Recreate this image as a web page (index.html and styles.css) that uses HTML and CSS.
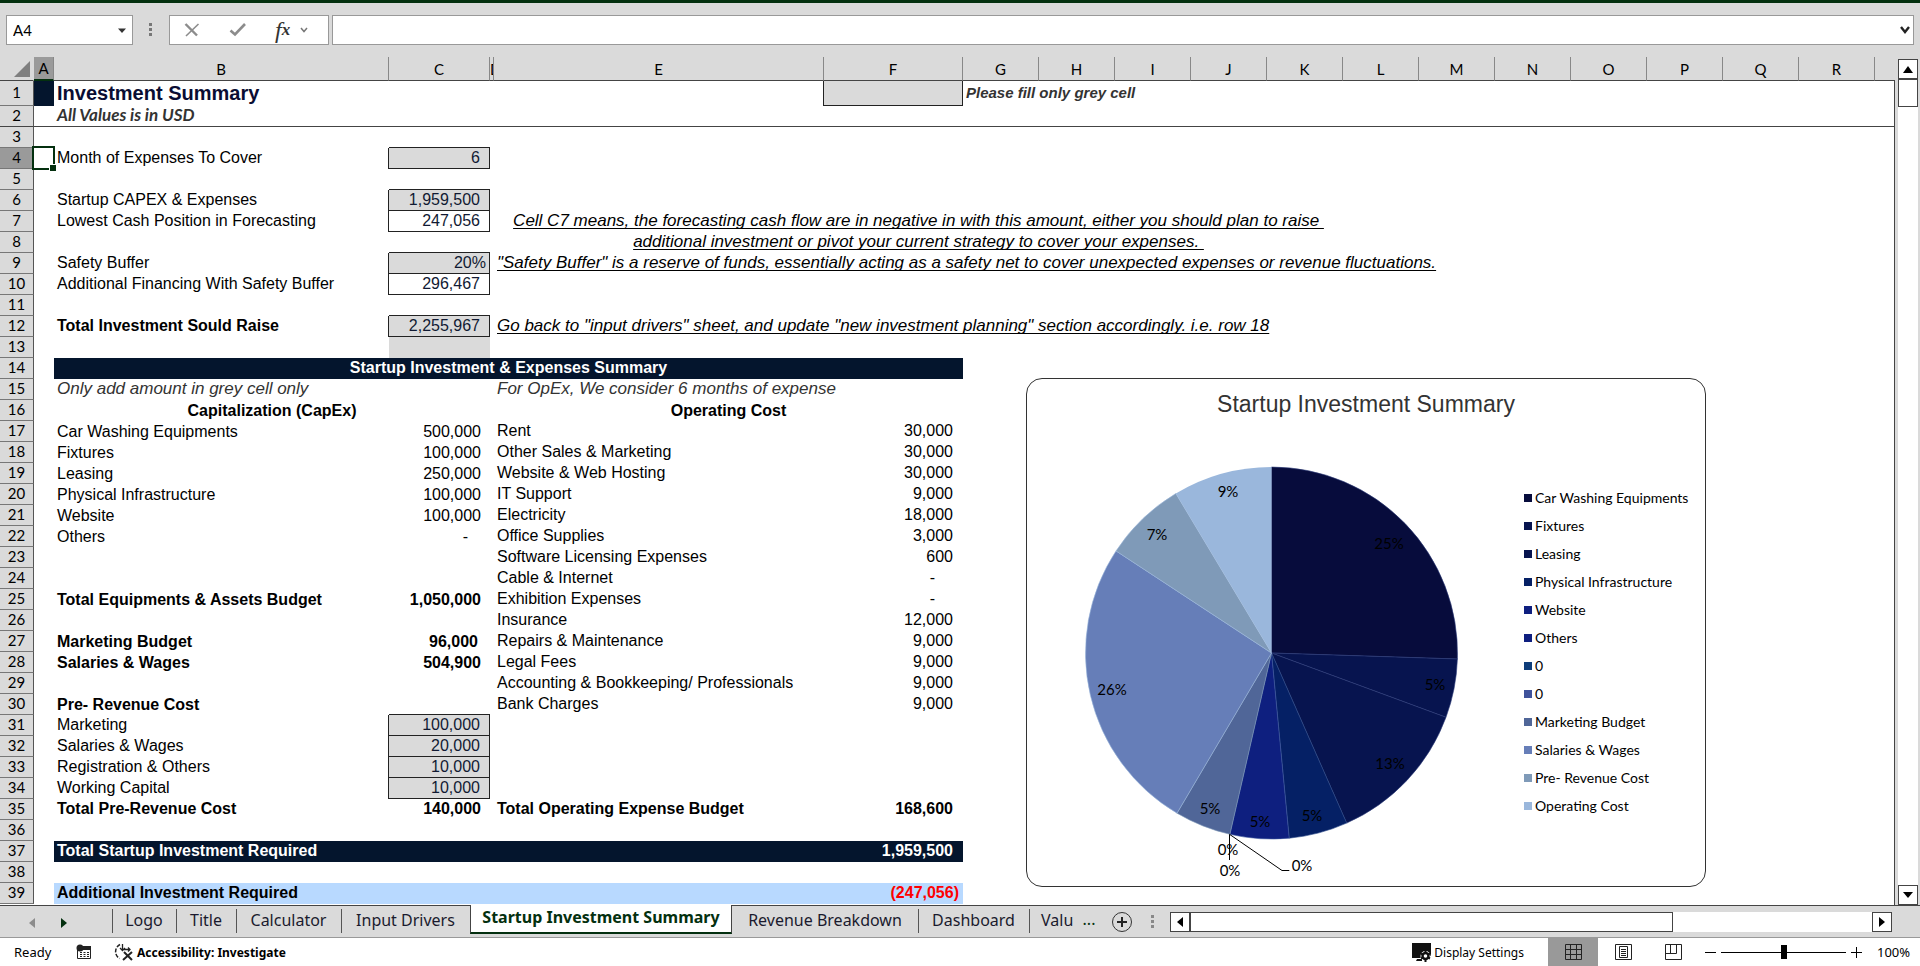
FILE: index.html
```html
<!DOCTYPE html>
<html lang="en">
<head>
<meta charset="utf-8">
<title>Startup Investment Summary</title>
<link rel="stylesheet" href="styles.css">
</head>
<body>
<div class="app">
  <header class="formula-bar">
    <div class="name-box">
      <input class="name-input" type="text" value="A4" aria-label="Name box">
      <button class="plain" type="button" aria-label="Open name list"><svg width="8" height="5" viewBox="0 0 8 5"><path d="M0 0.500h8L4 5z" fill="#333"/></svg></button>
    </div>
    <svg class="grip" width="4" height="14" viewBox="0 0 4 14"><path d="M0 0h3v3H0zM0 5h3v3H0zM0 10h3v3H0z" fill="#777"/></svg>
    <div class="fx-box">
      <button class="plain" type="button" aria-label="Cancel"><svg width="18" height="16" viewBox="0 0 18 16"><path d="M2.500 2L14 13.500" stroke="#8c8c8c" stroke-width="2.400" fill="none"/><path d="M15.500 2L3 14" stroke="#8c8c8c" stroke-width="1.600" fill="none"/></svg></button>
      <button class="plain" type="button" aria-label="Enter"><svg width="18" height="16" viewBox="0 0 18 16"><path d="M1.500 8.500L6 12.500L16 2" stroke="#8c8c8c" stroke-width="2.600" fill="none"/></svg></button>
      <div class="fx-group">
        <button class="plain fx" type="button" aria-label="Insert function"><i>f</i><i class="fx-x">x</i></button>
        <button class="plain" type="button" aria-label="More functions"><svg width="8" height="6" viewBox="0 0 8 6"><path d="M1 1l3 3.500L7 1" stroke="#777" stroke-width="1.500" fill="none"/></svg></button>
      </div>
    </div>
    <div class="formula">
      <input class="formula-input" type="text" aria-label="Formula">
      <button class="plain" type="button" aria-label="Expand formula bar"><svg width="10" height="8" viewBox="0 0 10 8"><path d="M1 1l4 5L9 1" stroke="#222" stroke-width="2.400" fill="none"/></svg></button>
    </div>
  </header>

  <main class="workspace">
    <div class="sheet">
      <table class="grid">
        <colgroup>
          <col class="w-num"><col class="w-a"><col class="w-b"><col class="w-c"><col class="w-d"><col class="w-e"><col class="w-f">
          <col class="w-s"><col class="w-s"><col class="w-s"><col class="w-s"><col class="w-s"><col class="w-s"><col class="w-s"><col class="w-s"><col class="w-s"><col class="w-s"><col class="w-s"><col class="w-s"><col>
        </colgroup>
        <thead>
          <tr>
            <th class="corner"><svg width="16" height="16" viewBox="0 0 16 16"><path d="M16 0v16H0z" fill="#7f7f7f"/></svg></th>
            <th class="current">A</th><th>B</th><th>C</th><th class="narrow">D</th><th>E</th><th>F</th><th>G</th><th>H</th><th>I</th><th>J</th><th>K</th><th>L</th><th>M</th><th>N</th><th>O</th><th>P</th><th>Q</th><th>R</th><th class="rest"></th>
          </tr>
        </thead>
        <tbody class="raised">
          <tr class="first"><th>1</th><td class="navy"></td><td class="title">Investment Summary</td><td></td><td></td><td></td><td class="sample"></td><td class="hint" colspan="4">Please fill only grey cell</td></tr>
          <tr class="frozen"><th>2</th><td></td><td class="subtitle">All Values is in USD</td><td colspan="17"></td></tr>
          <tr><th>3</th></tr>
          <tr><th class="current">4</th><td class="selected"></td><td>Month of Expenses To Cover</td><td class="num box grey">6</td></tr>
          <tr><th>5</th></tr>
          <tr><th>6</th><td></td><td>Startup CAPEX &amp; Expenses</td><td class="num box grey">1,959,500</td></tr>
          <tr><th>7</th><td></td><td>Lowest Cash Position in Forecasting</td><td class="num box">247,056</td><td></td><td class="note center" colspan="7">Cell C7 means, the forecasting cash flow are in negative in with this amount, either you should plan to raise </td></tr>
          <tr><th>8</th><td></td><td></td><td></td><td></td><td class="note center" colspan="7">additional investment or pivot your current strategy to cover your expenses. </td></tr>
          <tr><th>9</th><td></td><td>Safety Buffer</td><td class="num box grey percent">20%</td><td></td><td class="note" colspan="9">"Safety Buffer" is a reserve of funds, essentially acting as a safety net to cover unexpected expenses or revenue fluctuations.</td></tr>
          <tr><th>10</th><td></td><td>Additional Financing With Safety Buffer</td><td class="num box">296,467</td></tr>
          <tr><th>11</th></tr>
          <tr><th>12</th><td></td><td class="bold">Total Investment Sould Raise</td><td class="num box grey">2,255,967</td><td></td><td class="note" colspan="9">Go back to "input drivers" sheet, and update "new investment planning" section accordingly. i.e. row 18</td></tr>
          <tr><th>13</th><td></td><td></td><td class="grey"></td></tr>
          <tr><th>14</th><td></td><td class="navy bold center" colspan="5">Startup Investment &amp; Expenses Summary</td></tr>
          <tr><th>15</th><td></td><td class="remark">Only add amount in grey cell only</td><td></td><td></td><td class="remark" colspan="2">For OpEx, We consider 6 months of expense</td></tr>
        </tbody>
        <tbody>
          <tr><th>16</th><td></td><td class="bold center" colspan="2">Capitalization (CapEx)</td><td></td><td class="bold center" colspan="2">Operating Cost</td></tr>
          <tr><th>17</th><td></td><td>Car Washing Equipments</td><td class="num">500,000</td><td></td><td class="op">Rent</td><td class="num op">30,000</td></tr>
          <tr><th>18</th><td></td><td>Fixtures</td><td class="num">100,000</td><td></td><td class="op">Other Sales &amp; Marketing</td><td class="num op">30,000</td></tr>
          <tr><th>19</th><td></td><td>Leasing</td><td class="num">250,000</td><td></td><td class="op">Website &amp; Web Hosting</td><td class="num op">30,000</td></tr>
          <tr><th>20</th><td></td><td>Physical Infrastructure</td><td class="num">100,000</td><td></td><td class="op">IT Support</td><td class="num op">9,000</td></tr>
          <tr><th>21</th><td></td><td>Website</td><td class="num">100,000</td><td></td><td class="op">Electricity</td><td class="num op">18,000</td></tr>
          <tr><th>22</th><td></td><td>Others</td><td class="num nil">-</td><td></td><td class="op">Office Supplies</td><td class="num op">3,000</td></tr>
          <tr><th>23</th><td></td><td></td><td></td><td></td><td class="op">Software Licensing Expenses</td><td class="num op">600</td></tr>
          <tr><th>24</th><td></td><td></td><td></td><td></td><td class="op">Cable &amp; Internet</td><td class="num op nil">-</td></tr>
          <tr><th>25</th><td></td><td class="bold">Total Equipments &amp; Assets Budget</td><td class="num bold">1,050,000</td><td></td><td class="op">Exhibition Expenses</td><td class="num op nil">-</td></tr>
          <tr><th>26</th><td></td><td></td><td></td><td></td><td class="op">Insurance</td><td class="num op">12,000</td></tr>
          <tr><th>27</th><td></td><td class="bold">Marketing Budget</td><td class="num bold inset">96,000</td><td></td><td class="op">Repairs &amp; Maintenance</td><td class="num op">9,000</td></tr>
          <tr><th>28</th><td></td><td class="bold">Salaries &amp; Wages</td><td class="num bold">504,900</td><td></td><td class="op">Legal Fees</td><td class="num op">9,000</td></tr>
          <tr><th>29</th><td></td><td></td><td></td><td></td><td class="op">Accounting &amp; Bookkeeping/ Professionals</td><td class="num op">9,000</td></tr>
          <tr><th>30</th><td></td><td class="bold">Pre- Revenue Cost</td><td></td><td></td><td class="op">Bank Charges</td><td class="num op">9,000</td></tr>
        </tbody>
        <tbody class="raised">
          <tr><th>31</th><td></td><td>Marketing</td><td class="num box grey">100,000</td></tr>
          <tr><th>32</th><td></td><td>Salaries &amp; Wages</td><td class="num box grey">20,000</td></tr>
          <tr><th>33</th><td></td><td>Registration &amp; Others</td><td class="num box grey">10,000</td></tr>
          <tr><th>34</th><td></td><td>Working Capital</td><td class="num box grey">10,000</td></tr>
          <tr><th>35</th><td></td><td class="bold">Total Pre-Revenue Cost</td><td class="num bold">140,000</td><td></td><td class="bold">Total Operating Expense Budget</td><td class="num op bold">168,600</td></tr>
          <tr><th>36</th></tr>
          <tr><th>37</th><td></td><td class="navy bold" colspan="4">Total Startup Investment Required</td><td class="navy num op bold">1,959,500</td></tr>
          <tr><th>38</th></tr>
          <tr><th>39</th><td></td><td class="sky bold" colspan="4">Additional Investment Required</td><td class="sky num bold negative">(247,056)</td></tr>
        </tbody>
      </table>

      <figure class="chart">
        <figcaption class="chart-title">Startup Investment Summary</figcaption>
        <div class="chart-body">
          <svg class="pie" width="497" height="447" viewBox="0 0 497 447" role="img" aria-label="Share of startup investment by category">
            <g stroke-width="0.600" stroke-linejoin="round">
              <path d="M244.500 214V28A186 186 0 0 1 430.400 220z" fill="#070c3c" stroke="#2b3a78"/>
              <path d="M244.500 214L430.400 220A186 186 0 0 1 419 278.300z" fill="#07144f" stroke="#2b3a78"/>
              <path d="M244.500 214L419 278.300A186 186 0 0 1 319.700 384.100z" fill="#07144f" stroke="#2b3a78"/>
              <path d="M244.500 214L319.700 384.100A186 186 0 0 1 262.200 399.200z" fill="#052065" stroke="#2b4a88"/>
              <path d="M244.500 214L262.200 399.200A186 186 0 0 1 202.900 395.300z" fill="#0e1f7f" stroke="#3f5aa0"/>
              <path d="M244.500 214L202.900 395.300A186 186 0 0 1 150 374.200z" fill="#506698" stroke="#7f9ab8"/>
              <path d="M244.500 214L150 374.200A186 186 0 0 1 89 111.900z" fill="#667eb8" stroke="#9ab7dc"/>
              <path d="M244.500 214L89 111.900A186 186 0 0 1 148.800 54.500z" fill="#7f9ab8" stroke="#9ab7dc"/>
              <path d="M244.500 214L148.800 54.500A186 186 0 0 1 244.500 28z" fill="#9ab7dc"/>
            </g>
            <path d="M202.500 395.300V421M202.500 395.300L255 431.500H262.300" stroke="#000" fill="none"/>
            <g class="pie-labels" text-anchor="middle">
              <text x="362" y="110">25%</text><text x="408" y="251">5%</text><text x="363" y="330">13%</text>
              <text x="285" y="382">5%</text><text x="233" y="388">5%</text><text x="183" y="375">5%</text>
              <text x="85" y="256">26%</text><text x="130" y="101">7%</text><text x="201" y="58">9%</text>
              <text x="201" y="416">0%</text><text x="203" y="437">0%</text><text x="275" y="432">0%</text>
            </g>
          </svg>
          <ul class="legend">
            <li class="k1">Car Washing Equipments</li><li class="k2">Fixtures</li><li class="k3">Leasing</li><li class="k4">Physical Infrastructure</li><li class="k5">Website</li><li class="k6">Others</li><li class="k7">0</li><li class="k8">0</li><li class="k9">Marketing Budget</li><li class="k10">Salaries &amp; Wages</li><li class="k11">Pre- Revenue Cost</li><li class="k12">Operating Cost</li>
          </ul>
        </div>
      </figure>
    </div>
    <div class="vscroll">
      <button class="scroll-btn" type="button" aria-label="Scroll up"><svg width="10" height="7" viewBox="0 0 10 7"><path d="M5 0l5 7H0z"/></svg></button>
      <div class="vthumb"></div>
      <div class="vtrack"></div>
      <button class="scroll-btn" type="button" aria-label="Scroll down"><svg width="10" height="6" viewBox="0 0 10 6"><path d="M0 0h10L5 6z"/></svg></button>
    </div>
  </main>

  <nav class="tabs" aria-label="Sheets">
    <div class="tab-nav">
      <button class="plain" type="button" aria-label="Previous sheet"><svg width="6" height="10" viewBox="0 0 6 10"><path d="M6 0v10L0 5z" fill="#8c8c8c"/></svg></button>
      <button class="plain" type="button" aria-label="Next sheet"><svg width="6" height="10" viewBox="0 0 6 10"><path d="M0 0v10l6-5z" fill="#04300f"/></svg></button>
    </div>
    <button class="tab t1" type="button">Logo</button>
    <button class="tab t2" type="button">Title</button>
    <button class="tab t3" type="button">Calculator</button>
    <button class="tab t4" type="button">Input Drivers</button>
    <button class="tab active" type="button">Startup Investment Summary</button>
    <button class="tab t6" type="button">Revenue Breakdown</button>
    <button class="tab t7" type="button">Dashboard</button>
    <button class="tab t8" type="button">Valu</button>
    <button class="plain more" type="button" aria-label="More sheets">...</button>
    <button class="plain add" type="button" aria-label="New sheet"><svg width="22" height="22" viewBox="0 0 22 22"><circle cx="11" cy="11" r="9.500" fill="none" stroke="#333"/><path d="M11 6v10M6 11h10" stroke="#222" stroke-width="2"/></svg></button>
    <svg class="grip" width="4" height="14" viewBox="0 0 4 14"><path d="M0 0h3v3H0zM0 5h3v3H0zM0 10h3v3H0z" fill="#888"/></svg>
    <div class="hscroll">
      <button class="scroll-btn" type="button" aria-label="Scroll left"><svg width="6" height="10" viewBox="0 0 6 10"><path d="M6 0v10L0 5z"/></svg></button>
      <div class="hthumb"></div>
      <div class="htrack"></div>
      <button class="scroll-btn" type="button" aria-label="Scroll right"><svg width="6" height="10" viewBox="0 0 6 10"><path d="M0 0v10l6-5z"/></svg></button>
    </div>
  </nav>

  <footer class="status">
    <span class="ready">Ready</span>
    <button class="plain macro" type="button" aria-label="Record macro"><svg width="16" height="16" viewBox="0 0 16 16"><path d="M1.500 5.500h13v9h-13z" fill="#fff" stroke="#222"/><path d="M6 2h9v4H4z" fill="#222"/><circle cx="4" cy="4" r="3.500" fill="#222"/><path d="M4 8.500h2M7.500 8.500h2M11 8.500h2M4 10.500h2M7.500 10.500h2M11 10.500h2M4 12.500h2M7.500 12.500h2M11 12.500h2" stroke="#222"/></svg></button>
    <button class="plain access" type="button"><svg width="20" height="18" viewBox="0 0 20 18"><path d="M6 1.500A8 8 0 0 0 5.500 15.500" fill="none" stroke="#222" stroke-width="1.500" stroke-dasharray="4 1.500"/><path d="M8.500 1v6M6 5l2.500 2.500L11 5M10 6.500h6M14 4.500l2 2-2 2" fill="none" stroke="#222" stroke-width="1.300"/><path d="M10 9l8 8M18 9l-9 8" stroke="#222" stroke-width="2"/></svg>Accessibility: Investigate</button>
    <button class="plain display" type="button"><svg width="20" height="19" viewBox="0 0 20 19"><path d="M0 0h19v13h-8l-3 2H0zM5 16h5v2H4z" fill="#111"/><circle cx="13.500" cy="13" r="5" fill="#fff"/><circle cx="13.500" cy="13" r="3" fill="#fff" stroke="#111" stroke-width="2.400"/><path d="M13.500 8v2M13.500 16v3M9 10.500l2 1M18 10.500l-2 1M9 15.500l2-1M18 15.500l-2-1" stroke="#111" stroke-width="2"/></svg>Display Settings</button>
    <button class="plain view current-view" type="button" aria-label="Normal view"><svg width="17" height="16" viewBox="0 0 17 16"><path d="M0.500 0.500h16v15h-16zM5.500 0.500v15M11.500 0.500v15M0.500 5.500h16M0.500 10.500h16" fill="none" stroke="#222"/></svg></button>
    <button class="plain view" type="button" aria-label="Page layout view"><svg width="17" height="16" viewBox="0 0 17 16"><path d="M0.500 0.500h16v15h-16zM4.500 2.500h8v11h-8zM6 5.500h5M6 7.500h5M6 9.500h5M6 11.500h5" fill="none" stroke="#222"/></svg></button>
    <button class="plain view" type="button" aria-label="Page break preview"><svg width="17" height="16" viewBox="0 0 17 16"><path d="M0.500 0.500h16v15h-16zM5.500 0.500v9M11.500 0.500v9M0.500 9.500h11" fill="none" stroke="#222"/></svg></button>
    <button class="plain zoom-btn" type="button" aria-label="Zoom out"><svg width="11" height="11" viewBox="0 0 11 11"><path d="M0 5.500h11" stroke="#000"/></svg></button>
    <input class="zoom" type="range" min="0" max="100" value="50" aria-label="Zoom">
    <button class="plain zoom-btn" type="button" aria-label="Zoom in"><svg width="11" height="11" viewBox="0 0 11 11"><path d="M0 5.500h11M5.500 0v11" stroke="#000"/></svg></button>
    <span class="zoom-value">100%</span>
  </footer>
</div>
</body>
</html>
```
FILE: styles.css
```css
* { box-sizing: border-box; }
body {
  margin: 0;
  background: #dadada;
  color: #000;
  font-family: "Liberation Sans", Arial, sans-serif;
  font-size: 16px;
}
svg { display: block; }
button, input { font: inherit; color: inherit; }
.plain {
  display: flex;
  align-items: center;
  justify-content: center;
  padding: 0;
  border: 0;
  background: none;
}
.app {
  display: flex;
  flex-direction: column;
  min-height: 100vh;
  border-top: 3px solid #04300f;
}

/* Formula bar */
.formula-bar {
  display: flex;
  align-items: center;
  height: 54px;
  padding: 12px 6px;
}
.name-box, .fx-box, .formula {
  display: flex;
  align-items: center;
  height: 30px;
  border: 1px solid #999;
  background: #fff;
}
.name-box { width: 127px; padding: 0 6px; }
.name-input, .formula-input {
  flex: 1;
  min-width: 0;
  padding: 0;
  border: 0;
  background: none;
  font-family: Lato, sans-serif;
  font-size: 15px;
}
.grip { flex: none; margin: 0 16px; }
.fx-box { gap: 28px; width: 160px; margin-right: 3px; padding-left: 13px; }
.fx-group { display: flex; align-items: center; gap: 10px; }
.fx { color: #333; font-family: "Liberation Serif", serif; font-size: 24px; line-height: 24px; }
.fx-x { align-self: flex-end; font-size: 17px; font-weight: bold; }
.formula { flex: 1; padding: 0 3px; }

/* Worksheet */
.workspace { display: flex; flex: 1; }
.sheet {
  position: relative;
  flex: 1;
  min-width: 0;
  background: linear-gradient(#dadada 23px, #fff 23px);
}
.sheet::after {
  content: "";
  position: absolute;
  top: 23px;
  right: 0;
  bottom: 0;
  border-right: 1px solid #444;
}
.grid { width: 100%; table-layout: fixed; border-collapse: separate; border-spacing: 0; }
.w-num { width: 34px; }
.w-a { width: 20px; }
.w-b { width: 335px; }
.w-c { width: 101px; }
.w-d { width: 4px; }
.w-e { width: 330px; }
.w-f { width: 139px; }
.w-s { width: 76px; }
.grid th, .grid td { height: 21px; padding: 0; line-height: 21px; }
.grid th {
  padding-bottom: 2px;
  border-right: 1px solid #555;
  border-bottom: 1px solid #777;
  background: #dadada;
  font-family: Lato, sans-serif;
  font-size: 15px;
  font-weight: normal;
  line-height: 18px;
  text-align: center;
}
.grid thead th { height: 24px; padding: 0; border-right-color: #888; border-bottom-color: #444; line-height: 22px; }
.grid thead .corner { padding: 0 3px 0 14px; border-right-color: #dadada; }
.grid thead .rest { border-right: 0; }
.grid thead .narrow { overflow: hidden; text-align: left; }
.grid th.current { background: #9a9a9a; }
.grid thead .current { border-bottom: 2px solid #04300f; }
.grid td { padding: 0 3px; white-space: pre; }
.grid .raised td { padding-bottom: 2px; line-height: 19px; }
.grid .first th, .grid .first td { height: 25px; line-height: 22px; }
.grid .frozen th, .grid .frozen td { border-bottom: 1px solid #444; line-height: 18px; }
.title { color: #0a0d33; font-size: 20px; font-weight: bold; }
.subtitle { color: #333; font-family: Lato, sans-serif; font-size: 17px; font-style: italic; font-weight: bold; }
.hint { color: #333; font-size: 15px; font-style: italic; font-weight: bold; }
.grid .sample { background: #dadada; box-shadow: -1px 0 #222, inset -1px -1px #222; }
.grid .grey { background: #dadada; }
.grid .box { color: #111a33; box-shadow: inset -1px -1px #222, -1px 0 #222, 0 -1px #222; }
.grid .num { padding-right: 9px; text-align: right; }
.grid .num.box, .grid .num.op { padding-right: 10px; }
.grid .num.percent { padding-right: 4px; }
.grid .inset { padding-right: 12px; }
.grid .op { padding-bottom: 2px; line-height: 19px; }
.grid .num.nil { padding-right: 22px; }
.grid .op.nil { padding-right: 28px; }
.grid .center { text-align: center; }
.bold { font-weight: bold; }
.note {
  font-size: 17px;
  font-style: italic;
  text-decoration: underline;
  text-decoration-thickness: 1px;
  text-decoration-skip-ink: none;
  text-underline-offset: 2px;
}
.remark { color: #333; font-size: 17px; font-style: italic; }
.grid .navy { background: #04152d; color: #fff; }
.grid .sky { background: #b8d9ff; }
.grid .negative { padding-right: 4px; color: #f00; }
.selected { position: relative; }
.selected::before {
  content: "";
  position: absolute;
  inset: -2px -1px -1px -2px;
  border: 2px solid #04300f;
}
.selected::after {
  content: "";
  position: absolute;
  right: -2px;
  bottom: -2px;
  width: 6px;
  height: 6px;
  border: solid #fff;
  border-width: 1px 0 0 1px;
  background: #04300f;
}

/* Chart floating over the grid */
.chart {
  position: absolute;
  top: 321px;
  left: 1026px;
  margin: 0;
  border: 1px solid #333;
  border-radius: 16px;
  background: #fff;
}
.chart-title { height: 60px; padding-top: 11px; color: #333; font-size: 23px; line-height: 28px; text-align: center; }
.chart-body { display: flex; }
.pie-labels { font-family: Lato, sans-serif; font-size: 15px; }
.legend {
  width: 181px;
  margin: 0;
  padding: 45px 0 0;
  list-style: none;
  font-family: Lato, sans-serif;
  font-size: 14px;
  line-height: 28px;
  white-space: nowrap;
}
.legend li { display: flex; align-items: center; gap: 3px; }
.legend li::before { content: ""; width: 8px; height: 8px; background: currentColor; }
.k1::before { color: #070c3c; }
.k2::before, .k3::before { color: #07144f; }
.k4::before { color: #052065; }
.k5::before, .k6::before { color: #0e1f7f; }
.k7::before { color: #0e3d7a; }
.k8::before { color: #3f529b; }
.k9::before { color: #506698; }
.k10::before { color: #667eb8; }
.k11::before { color: #7f9ab8; }
.k12::before { color: #9ab7dc; }

/* Scroll bars */
.vscroll { display: flex; flex-direction: column; width: 25px; padding: 2px 2px 0 3px; }
.scroll-btn {
  display: flex;
  flex: none;
  align-items: center;
  justify-content: center;
  width: 20px;
  height: 20px;
  padding: 0;
  border: 1px solid #444;
  background: #fff;
}
.vthumb { height: 28px; border: 1px solid #444; background: #fff; }
.vtrack { flex: 1; background: #fff; }
.vthumb, .vtrack { width: 20px; }

/* Sheet tabs */
.tabs {
  display: flex;
  height: 33px;
  border-bottom: 1px solid #999;
  color: #1a1a2e;
  font-family: "Noto Sans", sans-serif;
  font-size: 16px;
}
.tabs > * { flex: none; border-top: 1px solid #444; }
.tabs > .grip { width: 24px; height: 32px; margin: 0; padding: 9px 0 8px; }
.tab-nav { display: flex; gap: 26px; width: 112px; padding: 3px 0 0 29px; }
.tab {
  position: relative;
  padding: 0 0 4px;
  border: 0;
  border-top: 1px solid #444;
  background: none;
  line-height: 22px;
}
.tab::before {
  content: "";
  position: absolute;
  top: 3px;
  bottom: 4px;
  left: 0;
  border-left: 1px solid #555;
}
.t1 { width: 64px; }
.t2 { width: 60px; }
.t3 { width: 105px; }
.t4 { width: 129px; }
.tab.active {
  width: 262px;
  height: 29px;
  border: solid #444;
  border-width: 0 1px;
  border-bottom: 2px solid #04300f;
  background: #fff;
  color: #04300f;
  font-weight: bold;
}
.tab.active::before, .t6::before { display: none; }
.t6 { width: 186px; }
.t7 { width: 111px; }
.t8 { width: 46px; padding-left: 12px; text-align: left; }
.tabs .more { width: 28px; padding-bottom: 6px; border-top: 1px solid #444; color: #04300f; }
.tabs .add { width: 38px; border-top: 1px solid #444; }
.hscroll { display: flex; flex: 1 1 0; align-items: center; padding: 1px 28px 0 5px; }
.hthumb { flex: 484; height: 20px; border: 1px solid #444; background: #fff; }
.htrack { flex: 200; height: 20px; background: #fff; }

/* Status bar */
.status {
  display: flex;
  align-items: center;
  height: 28px;
  padding: 0 10px 0 14px;
  background: #fff;
  font-family: "Noto Sans", sans-serif;
  font-size: 13px;
}
.ready { width: 62px; }
.access { gap: 3px; margin-left: 22px; font-size: 12px; font-weight: bold; }
.display { gap: 2px; margin: 0 24px 0 auto; font-size: 12px; }
.view { width: 50px; height: 28px; }
.current-view { background: #999; }
.zoom-btn { width: 11px; margin: 0 5px; }
.view + .zoom-btn { margin-left: 7px; }
.zoom { width: 125px; height: 16px; margin: 0; appearance: none; background: linear-gradient(#000, #000) center / 100% 1px no-repeat; }
.zoom::-webkit-slider-thumb { appearance: none; width: 6px; height: 14px; background: #000; }
.zoom-value { width: 33px; margin-left: 10px; text-align: right; }
```
